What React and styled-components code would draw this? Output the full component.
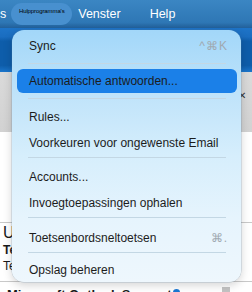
import React from 'react';
import styled, { createGlobalStyle } from 'styled-components';

const GlobalStyle = createGlobalStyle`
  html, body { margin: 0; padding: 0; }
  body {
    font-family: "Liberation Sans", Arial, sans-serif;
    background: #fff;
    overflow: hidden;
  }
`;

const Screen = styled.div`
  position: relative;
  width: 252px;
  height: 292px;
  overflow: hidden;
  display: flex;
  flex-direction: column;
`;

const MenuBar = styled.div`
  flex: none;
  height: 28px;
  display: flex;
  align-items: center;
  background: linear-gradient(180deg, #3b86c3 0%, #2e77b5 80%, #22609a 100%);
  color: #fff;
  font-size: 12.5px;
`;

const BarItem = styled.span`
  margin-left: ${p => p.$gap}px;
  padding-bottom: 1px;
`;

const AppPill = styled.div`
  margin-left: 5px;
  width: 61px;
  height: 22px;
  box-sizing: border-box;
  padding-top: 5px;
  border-radius: 11px;
  background: #4890cf;
  color: #000;
  font-size: 6px;
  text-align: center;
  letter-spacing: -0.1px;
`;

const Ribbon = styled.div`
  flex: none;
  height: 44px;
  background: linear-gradient(180deg, #1e74c8 0%, #1a6dc0 20%, #0e5daa 30%, #0e5daa 85%, #1b76cc 100%);
`;

const Toolbar = styled.div`
  flex: none;
  height: 60px;
  display: flex;
  justify-content: flex-end;
  padding: 18px 6px 0 0;
  box-sizing: border-box;
  background: linear-gradient(180deg, #dadada 0%, #d2d2d2 100%);
  color: #333;
  font-size: 10px;
`;

const List = styled.div`
  flex: 1;
  display: flex;
  flex-direction: column;
  padding-top: 90px;
  background: #fff;
`;

const Item = styled.div`
  border-top: 1px solid #c9c9c9;
  padding: 0 0 0 3px;
  display: flex;
  flex-direction: column;
  color: #1a1a1a;
  white-space: nowrap;
`;

const ItemHead = styled.div`
  font-size: 16px;
  line-height: 19px;
`;

const ItemLine = styled.div`
  font-size: 12px;
  line-height: 16px;
  font-weight: ${p => (p.$bold ? 700 : 400)};
`;

const BottomItem = styled.div`
  margin-top: 7px;
  border-top: 1px solid #c9c9c9;
  padding: 5px 0 0 7px;
  display: flex;
  align-items: flex-start;
  font-size: 13px;
  font-weight: 700;
  color: #1a1a1a;
  white-space: nowrap;
`;

const Dot = styled.span`
  margin: 2px 0 0 auto;
  width: 7px;
  height: 7px;
  border-radius: 50%;
  background: #1a78d4;
  flex: none;
`;

const Thumb = styled.span`
  margin: 0 22px 0 42px;
  width: 8px;
  height: 12px;
  background: #c4c4c4;
  flex: none;
`;

const Menu = styled.div`
  position: absolute;
  left: 12px;
  top: 30px;
  width: 229px;
  height: 252px;
  box-sizing: border-box;
  padding: 3px 4px 0 5px;
  border-radius: 12px;
  background: linear-gradient(180deg, #a2d7f9 0%, #bfe3fa 25%, #d6eefc 50%, #e6f4fd 75%, #eef7fd 100%);
  box-shadow: 0 0 0 0.5px rgba(90, 130, 160, 0.35), 0 3px 10px rgba(0, 0, 0, 0.18);
  display: flex;
  flex-direction: column;
`;

const MenuRow = styled.div`
  flex: none;
  height: ${p => (p.$active ? 24 : 26)}px;
  margin: ${p => (p.$active ? '1px 0' : '0')};
  display: flex;
  align-items: center;
  justify-content: space-between;
  padding: 0 9px 0 12px;
  border-radius: 6px;
  background: ${p => (p.$active ? '#1b80e8' : 'transparent')};
  color: #1c1c1c;
  font-size: 12px;
  white-space: nowrap;
`;

const Shortcut = styled.span`
  color: #a0a9b1;
  font-size: 12px;
  letter-spacing: 1px;
`;

const Separator = styled.div`
  flex: none;
  height: 1px;
  margin: ${p => p.$top}px 11px ${p => p.$bottom}px 11px;
  background: #c3d7e4;
`;

const menu = [
  { label: 'Sync', key: '^⌘K' },
  { sep: [4, 4] },
  { label: 'Automatische antwoorden...', active: true },
  { sep: [4, 5] },
  { label: 'Rules...' },
  { label: 'Voorkeuren voor ongewenste Email' },
  { sep: [1, 6] },
  { label: 'Accounts...' },
  { label: 'Invoegtoepassingen ophalen' },
  { sep: [1, 7] },
  { label: 'Toetsenbordsneltoetsen', key: '⌘.' },
  { sep: [1, 4] },
  { label: 'Opslag beheren' },
];

export default function App() {
  return (
    <>
      <GlobalStyle />
      <Screen>
        <MenuBar>
          <BarItem $gap={0}>s</BarItem>
          <AppPill>Hulpprogramma's</AppPill>
          <BarItem $gap={6}>Venster</BarItem>
          <BarItem $gap={29}>Help</BarItem>
        </MenuBar>
        <Ribbon />
        <Toolbar>✕</Toolbar>
        <List>
          <Item>
            <ItemHead>U</ItemHead>
            <ItemLine $bold>Te</ItemLine>
            <ItemLine>Te</ItemLine>
          </Item>
          <BottomItem>
            Microsoft Outlook Support
            <Dot />
            <Thumb />
          </BottomItem>
        </List>
        <Menu>
          {menu.map((m, i) =>
            m.sep ? (
              <Separator key={i} $top={m.sep[0]} $bottom={m.sep[1]} />
            ) : (
              <MenuRow key={i} $active={m.active}>
                <span>{m.label}</span>
                {m.key && <Shortcut>{m.key}</Shortcut>}
              </MenuRow>
            )
          )}
        </Menu>
      </Screen>
    </>
  );
}
